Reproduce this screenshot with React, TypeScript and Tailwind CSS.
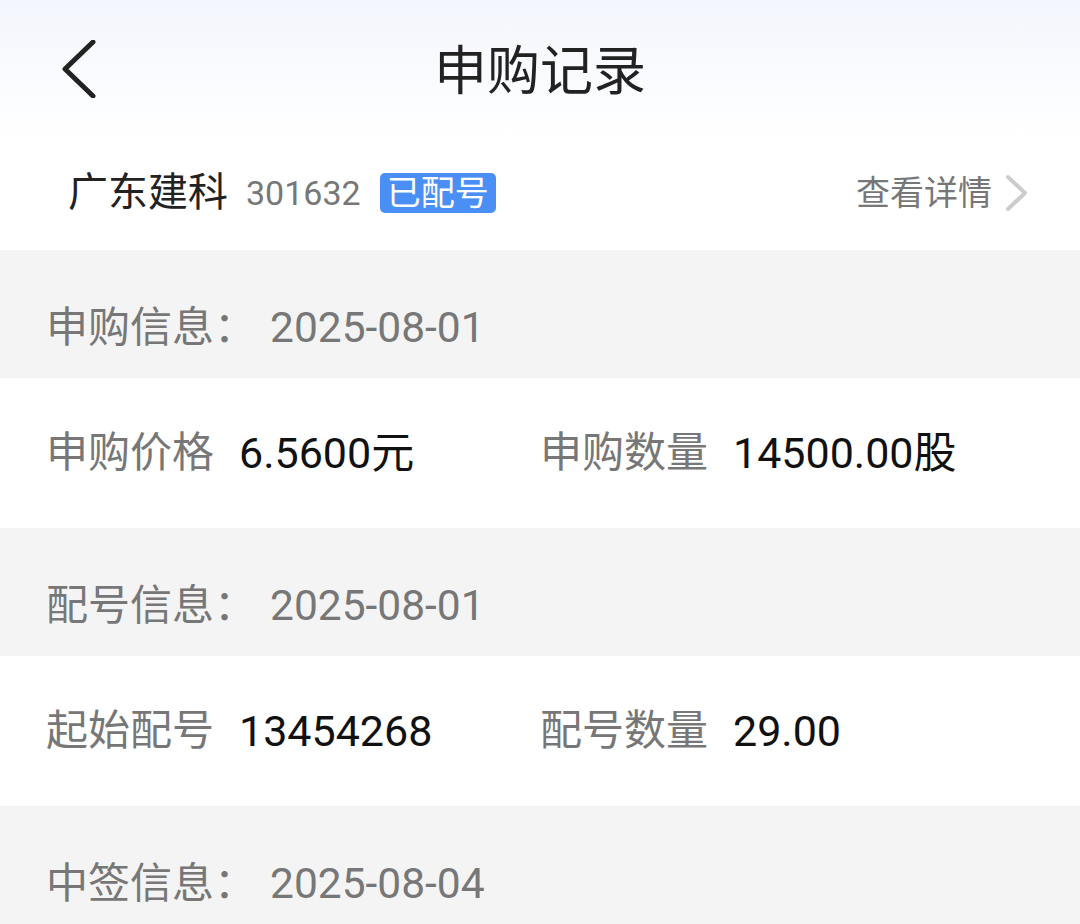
import React from "react";

const font = { fontFamily: '"Roboto", "Noto Sans CJK SC", sans-serif' };

function Section({ label, date }: { label: string; date: string }) {
  return (
    <div className="h-[128px] bg-[#f4f4f4] flex items-center pt-[28px] pl-[46px] text-[42px] text-[#777777] leading-none">
      <span>{label}：</span>
      <span className="ml-[14px] text-[42.5px]">{date}</span>
    </div>
  );
}

function Pair({ a, av, b, bv }: { a: string; av: string; b: string; bv: string }) {
  return (
    <div className="h-[150px] bg-white grid grid-cols-2 items-center px-[46px] text-[42px] leading-none">
      <div className="flex items-center gap-[25px]">
        <span className="text-[#777777]">{a}</span>
        <span className="text-[#111111] text-[43px]">{av}</span>
      </div>
      <div className="flex items-center gap-[25px]">
        <span className="text-[#777777]">{b}</span>
        <span className="text-[#111111] text-[43px]">{bv}</span>
      </div>
    </div>
  );
}

export default function App() {
  return (
    <div style={font} className="w-[1080px] h-[924px] overflow-hidden bg-white">
      <div className="h-[140px] bg-gradient-to-b from-[#f3f6fd] to-white pt-[42px]">
        <div className="relative h-[60px] flex items-center justify-center">
          <svg className="absolute left-[60px] top-[-2px]" width="38" height="58" viewBox="0 0 38 58">
            <path d="M33 2 L5 29 L33 56" fill="none" stroke="#222222" strokeWidth="5" strokeLinecap="round" strokeLinejoin="round" />
          </svg>
          <span className="text-[53px] text-[#222222] leading-none">申购记录</span>
        </div>
      </div>
      <div className="h-[110px] flex items-center pl-[68px] pr-[50px] pb-[4px]">
        <span className="text-[40px] text-[#222222] leading-none">广东建科</span>
        <span className="ml-[18px] text-[34px] text-[#777777] leading-none">301632</span>
        <span className="ml-[19px] h-[40px] px-[7px] rounded-[5px] bg-[#4a8ff6] text-white text-[34px] leading-[40px]">已配号</span>
        <span className="ml-auto text-[34px] text-[#777777] leading-none">查看详情</span>
        <svg className="ml-[12px]" width="26" height="38" viewBox="0 0 26 38">
          <path d="M4 3 L21 19 L4 35" fill="none" stroke="#cccccc" strokeWidth="4" strokeLinecap="round" strokeLinejoin="round" />
        </svg>
      </div>
      <Section label="申购信息" date="2025-08-01" />
      <Pair a="申购价格" av="6.5600元" b="申购数量" bv="14500.00股" />
      <Section label="配号信息" date="2025-08-01" />
      <Pair a="起始配号" av="13454268" b="配号数量" bv="29.00" />
      <Section label="中签信息" date="2025-08-04" />
    </div>
  );
}
